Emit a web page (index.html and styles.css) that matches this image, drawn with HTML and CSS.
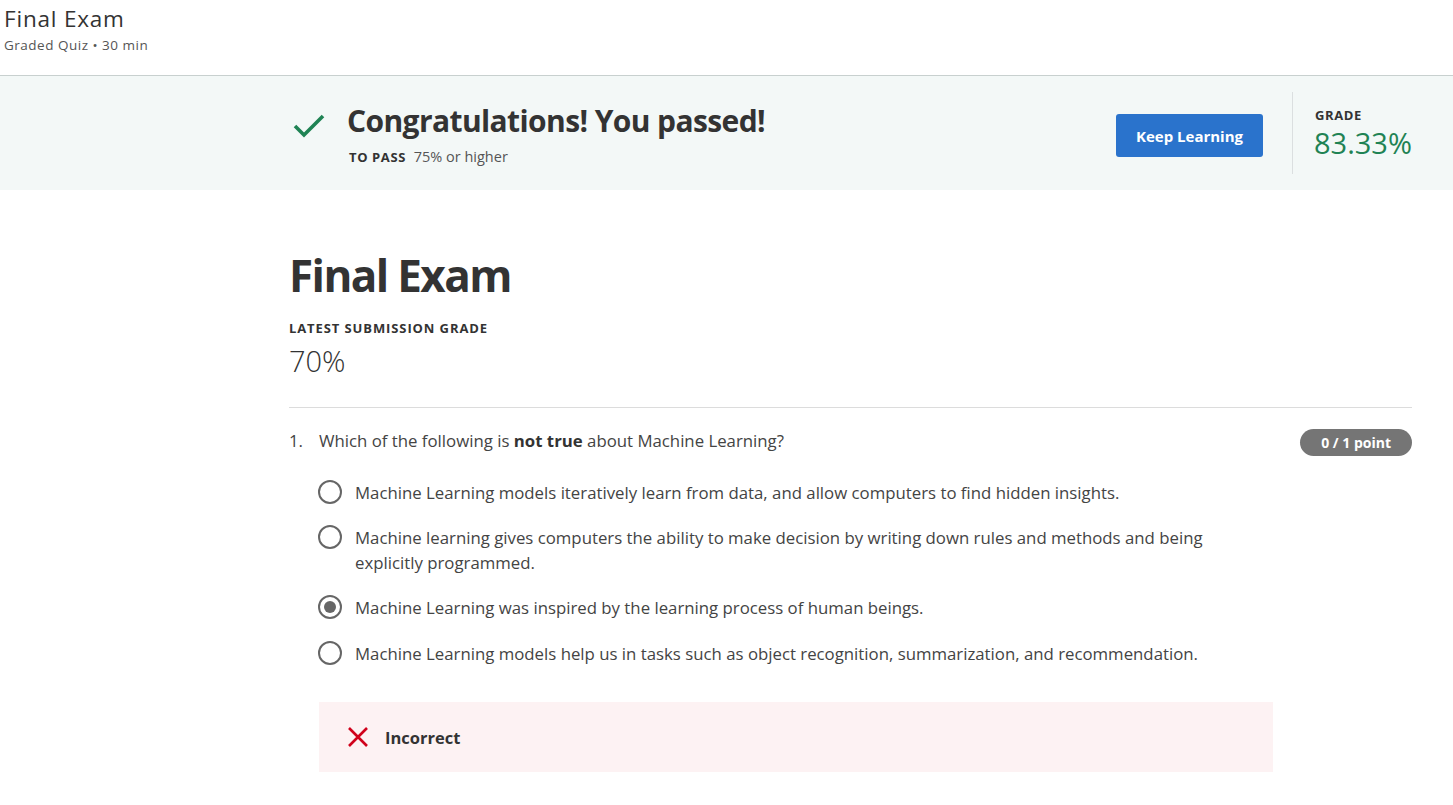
FILE: index.html
```html
<!DOCTYPE html>
<html lang="en">
<head>
<meta charset="utf-8">
<title>Final Exam</title>
<link rel="stylesheet" href="styles.css">
</head>
<body>
<header class="top">
  <div class="top-title">Final Exam</div>
  <div class="top-sub">Graded Quiz • 30 min</div>
</header>
<section class="banner">
  <div class="banner-inner">
    <div class="pass">
      <svg class="check" width="36" height="30" viewBox="0 0 36 30"><path d="M5 17 L14 26 L33 7" fill="none" stroke="#1f8354" stroke-width="3.6"/></svg>
      <div class="pass-text">
        <h2 class="pass-title">Congratulations! You passed!</h2>
        <div class="pass-req"><span class="label">TO PASS</span> 75% or higher</div>
      </div>
    </div>
    <button class="keep">Keep Learning</button>
    <div class="grade">
      <div class="label">GRADE</div>
      <div class="grade-value">83.33%</div>
    </div>
  </div>
</section>
<main class="content">
  <h1 class="exam-title">Final Exam</h1>
  <div class="label sub-label">LATEST SUBMISSION GRADE</div>
  <div class="sub-grade">70%</div>
  <hr class="rule">
  <div class="question">
    <div class="q-head">
      <span class="q-num">1.</span>
      <span class="q-text">Which of the following is <strong>not true</strong> about Machine Learning?</span>
      <span class="points">0 / 1 point</span>
    </div>
    <ul class="options">
      <li class="option"><span class="radio"></span><span class="opt-text">Machine Learning models iteratively learn from data, and allow computers to find hidden insights.</span></li>
      <li class="option"><span class="radio"></span><span class="opt-text">Machine learning gives computers the ability to make decision by writing down rules and methods and being explicitly programmed.</span></li>
      <li class="option"><span class="radio checked"></span><span class="opt-text">Machine Learning was inspired by the learning process of human beings.</span></li>
      <li class="option"><span class="radio"></span><span class="opt-text">Machine Learning models help us in tasks such as object recognition, summarization, and recommendation.</span></li>
    </ul>
    <div class="feedback">
      <svg class="xmark" width="20" height="20" viewBox="0 0 20 20"><path d="M1 1 L19 19 M19 1 L1 19" fill="none" stroke="#d0021b" stroke-width="2.6"/></svg>
      <span class="fb-text">Incorrect</span>
    </div>
  </div>
</main>
</body>
</html>
```
FILE: styles.css
```css
* { box-sizing: border-box; }
html, body { margin: 0; padding: 0; }
body {
  font-family: "Open Sans", "Noto Sans", sans-serif;
  color: #333;
  background: #fff;
}
.top {
  height: 76px;
  padding: 4px 4px 0;
  border-bottom: 1px solid #c8d0cf;
}
.top-title {
  font-size: 22.5px;
  line-height: 30px;
  letter-spacing: 0.8px;
  color: #333;
}
.top-sub {
  font-size: 13.5px;
  line-height: 18px;
  letter-spacing: 0.5px;
  color: #555;
  margin-top: 2px;
}
.banner {
  background: #f3f8f7;
  height: 114px;
  padding-top: 16px;
}
.banner-inner {
  margin-left: 289px;
  width: 1123px;
  display: flex;
  align-items: flex-start;
}
.pass {
  display: flex;
  flex: 1;
  align-items: flex-start;
}
.check { margin-top: 17px; margin-left: 1px; }
.pass-text { margin-left: 21px; }
.pass-title {
  margin: 0;
  font-size: 30px;
  font-weight: 700;
  letter-spacing: -0.6px;
  line-height: 40px;
  margin-top: 9px;
  color: #333;
}
.label {
  font-size: 13px;
  font-weight: 700;
  letter-spacing: 0.6px;
  color: #333;
}
.pass-req {
  font-size: 14.5px;
  color: #555;
  margin-top: 6px;
  margin-left: 2px;
}
.pass-req .label { margin-right: 4px; }
.keep {
  margin-top: 22px;
  width: 147px;
  height: 43px;
  border: none;
  border-radius: 3px;
  background: #2a73cc;
  color: #fff;
  font-family: inherit;
  font-size: 15px;
  font-weight: 700;
  padding: 0;
}
.grade {
  margin-left: 29px;
  border-left: 1px solid #dbdfe0;
  height: 82px;
  padding-left: 22px;
  width: 120px;
  padding-top: 14px;
  display: flex;
  flex-direction: column;
}
.grade .label { line-height: 18px; }
.grade-value {
  font-size: 29px;
  line-height: 38px;
  color: #1f8354;
  margin-left: -1px;
}
.content {
  margin-left: 289px;
  width: 1123px;
  padding-top: 55px;
}
.exam-title {
  margin: 0;
  font-size: 44px;
  font-weight: 700;
  letter-spacing: -1.6px;
  line-height: 60px;
  color: #333;
}
.sub-label { margin-top: 14px; line-height: 18px; letter-spacing: 0.9px; }
.sub-grade {
  font-size: 29px;
  font-weight: 300;
  line-height: 38px;
  margin-top: 5px;
  color: #333;
}
.rule {
  border: none;
  border-top: 1px solid #dcdcdc;
  margin: 27px 0 0;
}
.question { padding-top: 21px; }
.q-head {
  display: flex;
  align-items: flex-start;
  font-size: 16.8px;
  line-height: 24px;
  color: #444;
}
.q-num { width: 30px; }
.q-text { flex: 1; }
.q-text strong { color: #333; }
.points {
  background: #757575;
  color: #fff;
  font-size: 14px;
  font-weight: 700;
  height: 27px;
  line-height: 27px;
  border-radius: 14px;
  padding: 0 21px;
  margin-top: 0;
}
.options {
  list-style: none;
  margin: 24px 0 0 29px;
  padding: 0;
  width: 900px;
}
.option {
  display: flex;
  align-items: flex-start;
  margin-bottom: 20px;
  font-size: 16.8px;
  line-height: 25px;
  color: #444;
}
.option:nth-child(3) { margin-bottom: 21px; }
.radio {
  flex: none;
  width: 24px;
  height: 24px;
  border: 2px solid #666;
  border-radius: 50%;
  margin-top: 0;
  margin-right: 13px;
  display: flex;
  align-items: center;
  justify-content: center;
}
.radio.checked::after {
  content: "";
  width: 12px;
  height: 12px;
  border-radius: 50%;
  background: #666;
}
.feedback {
  margin: 36px 0 0 30px;
  width: 954px;
  height: 70px;
  background: #fdf2f3;
  display: flex;
  align-items: center;
  padding-left: 29px;
}
.xmark { margin-right: 17px; }
.fb-text {
  font-size: 16.5px;
  font-weight: 700;
  color: #333;
}
```
